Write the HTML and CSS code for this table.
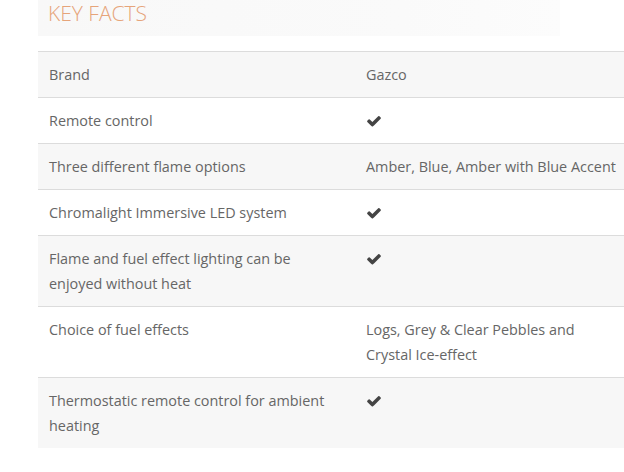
FILE: index.html
```html
<!DOCTYPE html>
<html>
<head>
<meta charset="utf-8">
<link rel="stylesheet" href="styles.css">
</head>
<body>
<div class="page">
  <div class="facts-head"><h2 class="facts-title">KEY FACTS</h2></div>
  <table class="facts">
    <colgroup><col class="col-label"><col class="col-value"></colgroup>
    <tbody>
      <tr><td>Brand</td><td>Gazco</td></tr>
      <tr><td>Remote control</td><td><svg class="check" viewBox="0 0 1792 1792"><path d="M1671 566q0 40-28 68l-724 724-136 136q-28 28-68 28t-68-28l-136-136-362-362q-28-28-28-68t28-68l136-136q28-28 68-28t68 28l294 295 656-657q28-28 68-28t68 28l136 136q28 28 28 68z"/></svg></td></tr>
      <tr><td>Three different flame options</td><td>Amber, Blue, Amber with Blue Accent</td></tr>
      <tr><td>Chromalight Immersive LED system</td><td><svg class="check" viewBox="0 0 1792 1792"><path d="M1671 566q0 40-28 68l-724 724-136 136q-28 28-68 28t-68-28l-136-136-362-362q-28-28-28-68t28-68l136-136q28-28 68-28t68 28l294 295 656-657q28-28 68-28t68 28l136 136q28 28 28 68z"/></svg></td></tr>
      <tr><td>Flame and fuel effect lighting can be enjoyed without heat</td><td><svg class="check" viewBox="0 0 1792 1792"><path d="M1671 566q0 40-28 68l-724 724-136 136q-28 28-68 28t-68-28l-136-136-362-362q-28-28-28-68t28-68l136-136q28-28 68-28t68 28l294 295 656-657q28-28 68-28t68 28l136 136q28 28 28 68z"/></svg></td></tr>
      <tr><td>Choice of fuel effects</td><td>Logs, Grey &amp; Clear Pebbles and Crystal Ice-effect</td></tr>
      <tr><td>Thermostatic remote control for ambient heating</td><td><svg class="check" viewBox="0 0 1792 1792"><path d="M1671 566q0 40-28 68l-724 724-136 136q-28 28-68 28t-68-28l-136-136-362-362q-28-28-28-68t28-68l136-136q28-28 68-28t68 28l294 295 656-657q28-28 68-28t68 28l136 136q28 28 28 68z"/></svg></td></tr>
    </tbody>
  </table>
</div>
</body>
</html>
```
FILE: styles.css
```css
html, body {
  margin: 0;
  padding: 0;
  background: #fff;
}
body {
  font-family: "Open Sans", "DejaVu Sans", sans-serif;
  color: #666;
  overflow: hidden;
}
.page {
  padding-left: 38px;
  width: 600px;
}
.facts-head {
  width: 522px;
  height: 36px;
  background: linear-gradient(to right, #f8f8f8 0%, #fafafa 70%, #fcfcfc 100%);
  box-sizing: border-box;
  padding: 1px 10px 0;
}
.facts-title {
  margin: 0;
  font-size: 21px;
  line-height: 25px;
  font-weight: 300;
  color: #e6a47a;
}
.facts {
  margin-top: 15px;
  width: 600px;
  table-layout: fixed;
  border-collapse: collapse;
  font-size: 14.4px;
  line-height: 25px;
}
.col-label { width: 317px; }
.col-value { width: 283px; }
.facts tr {
  border-top: 1px solid #dcdcdc;
}
.facts tr:nth-child(odd) {
  background: #f7f7f7;
}
.facts td {
  padding: 10px 18px 10px 11px;
  vertical-align: top;
}
.check {
  width: 16px;
  height: 16px;
  fill: #444;
  vertical-align: -3px;
}
```
